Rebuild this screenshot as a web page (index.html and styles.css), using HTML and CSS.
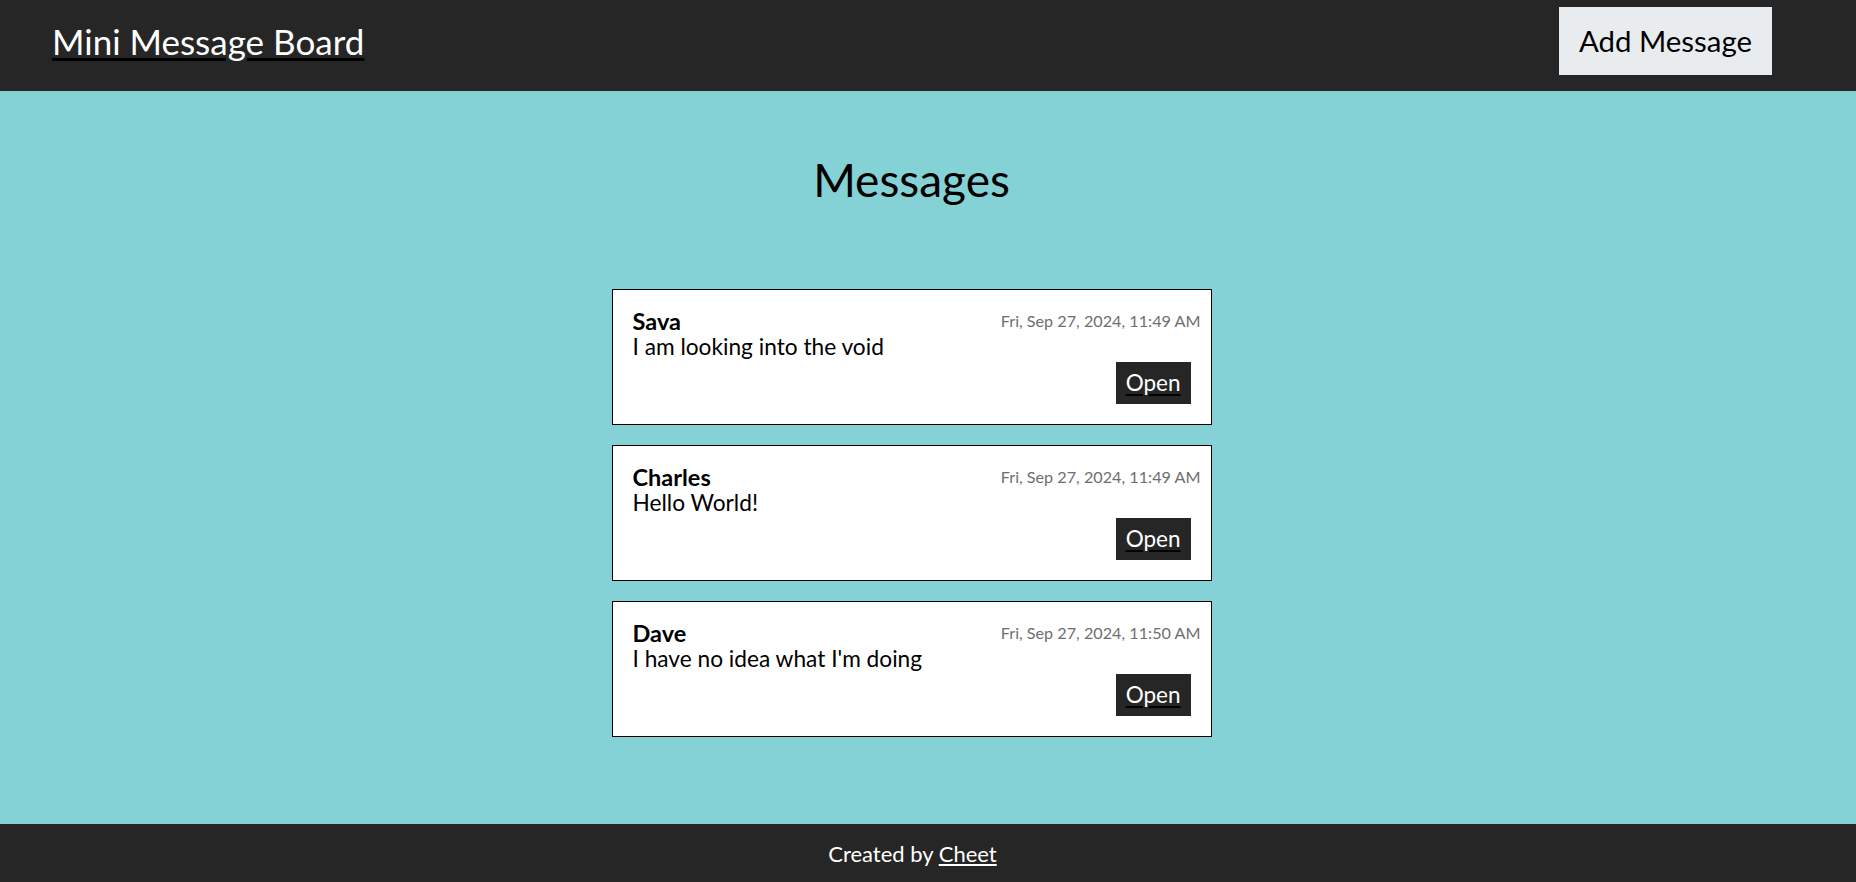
FILE: index.html
```html
<!DOCTYPE html>
<html lang="en">
<head>
<meta charset="utf-8">
<title>Mini Message Board</title>
<link rel="stylesheet" href="styles.css">
</head>
<body>
<header class="site-header">
  <a class="brand" href="#">Mini Message Board</a>
  <a class="add-btn" href="#">Add Message</a>
</header>
<main class="content">
  <h1 class="page-title">Messages</h1>
  <ul class="message-list">
    <li class="message-card">
      <div class="message-head">
        <span class="message-user">Sava</span>
        <span class="message-date">Fri, Sep 27, 2024, 11:49 AM</span>
      </div>
      <p class="message-text">I am looking into the void</p>
      <div class="message-actions"><a class="open-btn" href="#">Open</a></div>
    </li>
    <li class="message-card">
      <div class="message-head">
        <span class="message-user">Charles</span>
        <span class="message-date">Fri, Sep 27, 2024, 11:49 AM</span>
      </div>
      <p class="message-text">Hello World!</p>
      <div class="message-actions"><a class="open-btn" href="#">Open</a></div>
    </li>
    <li class="message-card">
      <div class="message-head">
        <span class="message-user">Dave</span>
        <span class="message-date">Fri, Sep 27, 2024, 11:50 AM</span>
      </div>
      <p class="message-text">I have no idea what I'm doing</p>
      <div class="message-actions"><a class="open-btn" href="#">Open</a></div>
    </li>
  </ul>
</main>
<footer class="site-footer">
  <span>Created by <a class="footer-link" href="#">Cheet</a></span>
</footer>
</body>
</html>
```
FILE: styles.css
```css
* { box-sizing: border-box; }

html, body { margin: 0; padding: 0; }

body {
  min-height: 100vh;
  display: flex;
  flex-direction: column;
  font-family: Lato, "Open Sans", sans-serif;
  color: #000;
  background: #84d1d6;
}

.site-header {
  height: 91px;
  background: #262626;
  display: flex;
  align-items: center;
  justify-content: space-between;
  padding: 0 84px 9px 52px;
}

.brand {
  font-size: 35px;
  line-height: 42px;
  color: #fff;
  text-decoration: underline;
  text-decoration-color: #000;
  text-decoration-thickness: 3px;
  text-underline-offset: 3px;
}

.add-btn {
  display: block;
  height: 68px;
  line-height: 68px;
  padding: 0 20px;
  background: #e9ecef;
  color: #000;
  font-size: 29.4px;
  text-decoration: none;
}

.content {
  flex: 1;
  display: flex;
  flex-direction: column;
  align-items: center;
  padding: 0 33px 0 0;
}

.page-title {
  margin: 61px 0 82px;
  font-size: 46px;
  line-height: 55px;
  font-weight: 400;
}

.message-list {
  list-style: none;
  margin: 0;
  padding: 0;
  display: flex;
  flex-direction: column;
  gap: 20px;
  width: 600px;
}

.message-card {
  background: #fff;
  border: 1px solid #000;
  padding: 18px 20px 20px 20px;
}

.message-head {
  display: flex;
  justify-content: space-between;
  align-items: flex-start;
  line-height: 26px;
}

.message-user {
  font-size: 23.5px;
  font-weight: 700;
}

.message-date {
  font-size: 16.2px;
  color: #6e6e6e;
  margin-right: -10px;
}

.message-text {
  margin: 0;
  font-size: 22.7px;
  line-height: 26px;
}

.message-actions {
  display: flex;
  justify-content: flex-end;
  margin-top: 2px;
}

.open-btn {
  display: block;
  height: 42px;
  line-height: 42px;
  padding: 0 10px;
  background: #262626;
  color: #fff;
  font-size: 22.5px;
  text-decoration: underline;
  text-decoration-color: #000;
  text-decoration-thickness: 2px;
  text-underline-offset: 3px;
}

.site-footer {
  height: 58px;
  background: #262626;
  color: #fff;
  display: flex;
  align-items: center;
  justify-content: center;
  padding-right: 31px;
  font-size: 22px;
}

.footer-link {
  color: #fff;
  text-decoration: underline;
}
```
